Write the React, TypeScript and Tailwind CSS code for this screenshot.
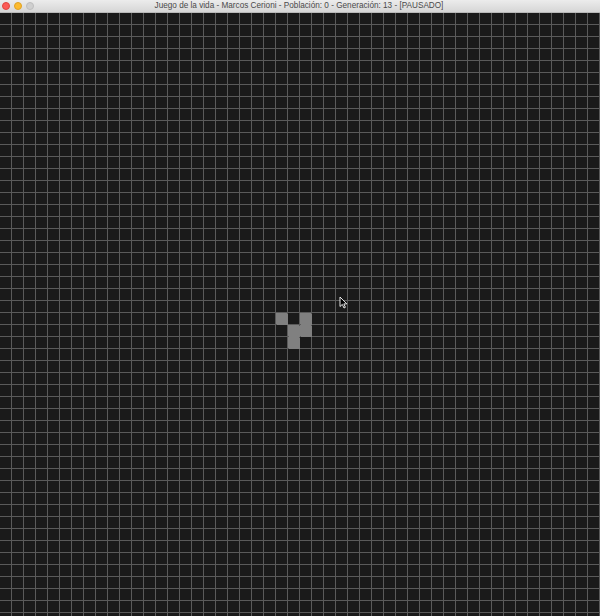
import React from 'react';

const COLS = 50;
const ROWS = 51;

// glider, [row, col]
const alive = new Set(['25-23', '25-25', '26-24', '26-25', '27-24']);

const TitleBar: React.FC = () => (
  <div className="relative flex h-[13px] items-center bg-gradient-to-b from-[#ececec] to-[#d6d6d6] border-b border-[#b9b9b9]">
    <div className="flex items-center gap-[4px] pl-[2px]">
      <span className="block h-[8px] w-[8px] rounded-full bg-[#fc5b57] border border-[#e0443e]" />
      <span className="block h-[8px] w-[8px] rounded-full bg-[#fdbb2e] border border-[#dea123]" />
      <span className="block h-[8px] w-[8px] rounded-full bg-[#cfcfcf] border border-[#bdbdbd]" />
    </div>
    <div
      className="flex-1 -ml-[36px] text-center text-[8.2px] leading-none text-[#4a4a4a]"
      style={{ fontFamily: '"Liberation Sans", Arial, sans-serif' }}
    >
      Juego de la vida - Marcos Cerioni - Población: 0 - Generación: 13 - [PAUSADO]
    </div>
  </div>
);

const Cursor: React.FC = () => (
  <svg className="absolute left-[339px] top-[296px]" width="9" height="13" viewBox="0 0 9 13">
    <path d="M1 1 L1 10.5 L3.3 8.4 L5 12 L6.4 11.3 L4.8 7.9 L7.8 7.9 Z" fill="#000" stroke="#fff" strokeWidth="0.9" strokeLinejoin="round" />
  </svg>
);

export default function App() {
  const cells = [];
  for (let r = 0; r < ROWS; r++) {
    for (let c = 0; c < COLS; c++) {
      const on = alive.has(`${r}-${c}`);
      cells.push(
        <div
          key={`${r}-${c}`}
          className={on ? 'bg-[#808080] shadow-[1px_1px_0_#808080]' : 'bg-[#1a1a1a]'}
        />
      );
    }
  }

  return (
    <div className="relative h-[616px] w-[600px] overflow-hidden bg-[#1a1a1a]">
      <TitleBar />
      <div className="h-[603px] overflow-hidden bg-[#5a5a5a]">
        <div className="grid grid-cols-[repeat(50,11px)] grid-rows-[repeat(51,11px)] gap-px">
          {cells}
        </div>
      </div>
      <Cursor />
    </div>
  );
}
